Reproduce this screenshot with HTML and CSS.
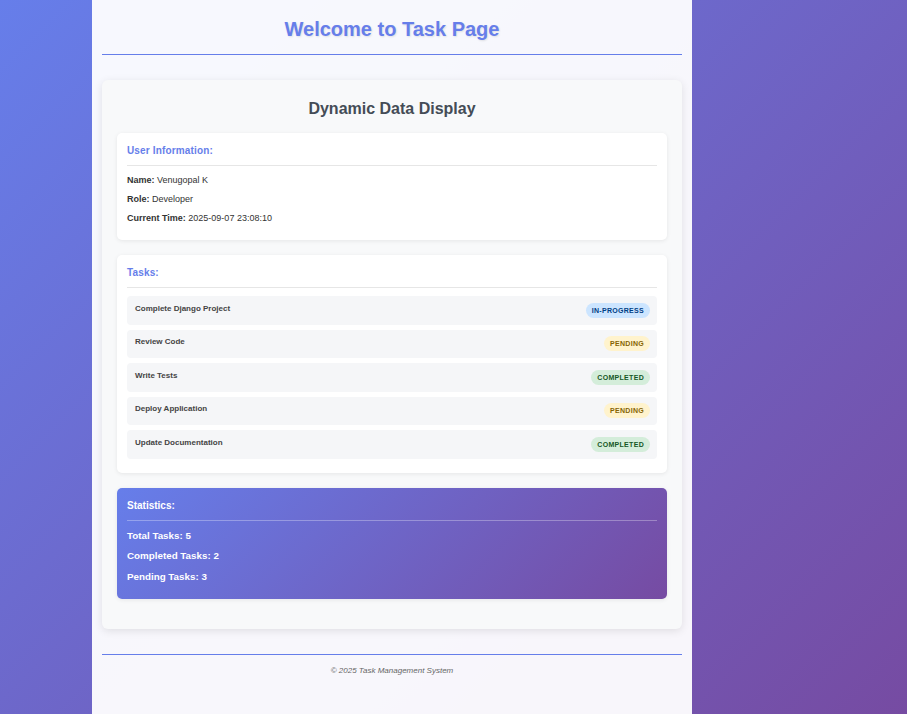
FILE: index.html
```html
<!DOCTYPE html>
<html>
<head>
<meta charset="utf-8">
<link rel="stylesheet" href="styles.css">
</head>
<body>
<div class="container">
  <header class="page-header">
    <h1>Welcome to Task Page</h1>
  </header>
  <main class="card">
    <h2>Dynamic Data Display</h2>
    <section class="panel">
      <h3>User Information:</h3>
      <p><strong>Name:</strong> Venugopal K</p>
      <p><strong>Role:</strong> Developer</p>
      <p><strong>Current Time:</strong> 2025-09-07 23:08:10</p>
    </section>
    <section class="panel tasks-panel">
      <h3>Tasks:</h3>
      <ul class="tasks">
        <li><span class="task-title">Complete Django Project</span><span class="badge progress">in-progress</span></li>
        <li><span class="task-title">Review Code</span><span class="badge pending">pending</span></li>
        <li><span class="task-title">Write Tests</span><span class="badge completed">completed</span></li>
        <li><span class="task-title">Deploy Application</span><span class="badge pending">pending</span></li>
        <li><span class="task-title">Update Documentation</span><span class="badge completed">completed</span></li>
      </ul>
    </section>
    <section class="panel stats">
      <h3>Statistics:</h3>
      <p>Total Tasks: 5</p>
      <p>Completed Tasks: 2</p>
      <p>Pending Tasks: 3</p>
    </section>
  </main>
  <footer class="page-footer">
    <p>&copy; 2025 Task Management System</p>
  </footer>
</div>
</body>
</html>
```
FILE: styles.css
```css
html, body {
  margin: 0;
  padding: 0;
}
body {
  min-height: 714px;
  background: linear-gradient(135deg, #667eea 0%, #764ba2 100%);
  font-family: "Liberation Sans", Arial, sans-serif;
  color: #333;
}
.container {
  width: 580px;
  margin-left: 92px;
  padding: 0 10px;
  min-height: 714px;
  background: rgba(255, 255, 255, 0.95);
  box-sizing: content-box;
  overflow: hidden;
}
.page-header {
  border-bottom: 1px solid #667eea;
  padding: 16px 0 12px;
  text-align: center;
}
.page-header h1 {
  margin: 0;
  font-size: 20px;
  line-height: 26px;
  color: #667eea;
  text-shadow: 1px 1px 2px rgba(0, 0, 0, 0.1);
}
.card {
  margin-top: 25px;
  background: #f8f9fa;
  border-radius: 6px;
  box-shadow: 0 2px 8px rgba(0, 0, 0, 0.1);
  padding: 17px 15px 30px;
}
.card h2 {
  margin: 0 0 12px;
  text-align: center;
  font-size: 16px;
  line-height: 24px;
  color: #444c56;
}
.panel {
  background: #fff;
  border-radius: 5px;
  box-shadow: 0 1px 4px rgba(0, 0, 0, 0.08);
  padding: 10px 10px 12px;
  margin-bottom: 15px;
}
.panel h3 {
  margin: 0 0 5px;
  padding: 0 0 7px;
  border-bottom: 1px solid #e6e6e6;
  font-size: 10px;
  line-height: 15px;
  color: #667eea;
  letter-spacing: 0.15px;
}
.panel p {
  margin: 0;
  font-size: 9px;
  line-height: 19px;
  color: #333;
}
.panel p strong {
  font-weight: 600;
}
.tasks-panel {
  padding-bottom: 14px;
}
.tasks-panel h3 {
  margin-bottom: 8px;
}
.tasks {
  list-style: none;
  margin: 0;
  padding: 0;
  display: flex;
  flex-direction: column;
  gap: 5px;
}
.tasks li {
  display: flex;
  align-items: center;
  justify-content: space-between;
  background: #f5f6f8;
  border-radius: 4px;
  height: 28.5px;
  padding: 0 7px 0 8px;
}
.task-title {
  font-size: 8px;
  font-weight: bold;
  color: #444;
  position: relative;
  top: -2px;
}
.badge {
  font-size: 7px;
  font-weight: bold;
  text-transform: uppercase;
  padding: 4px 6px;
  border-radius: 10px;
  letter-spacing: 0.3px;
}
.badge.progress { background: #cce5ff; color: #004085; }
.badge.pending { background: #fff3cd; color: #856404; }
.badge.completed { background: #d4edda; color: #155724; }
.panel.stats {
  background: linear-gradient(135deg, #667eea 0%, #764ba2 100%);
  color: #fff;
  margin-bottom: 0;
  padding-bottom: 12px;
}
.panel.stats h3 {
  color: #fff;
  border-bottom-color: rgba(255, 255, 255, 0.3);
  letter-spacing: 0;
}
.panel.stats p {
  color: #fff;
  font-weight: bold;
  font-size: 9.8px;
  line-height: 20.5px;
}
.page-footer {
  margin-top: 25px;
  border-top: 1px solid #667eea;
  text-align: center;
  padding-top: 11px;
}
.page-footer p {
  margin: 0;
  font-size: 8px;
  font-style: italic;
  color: #666;
}
```
